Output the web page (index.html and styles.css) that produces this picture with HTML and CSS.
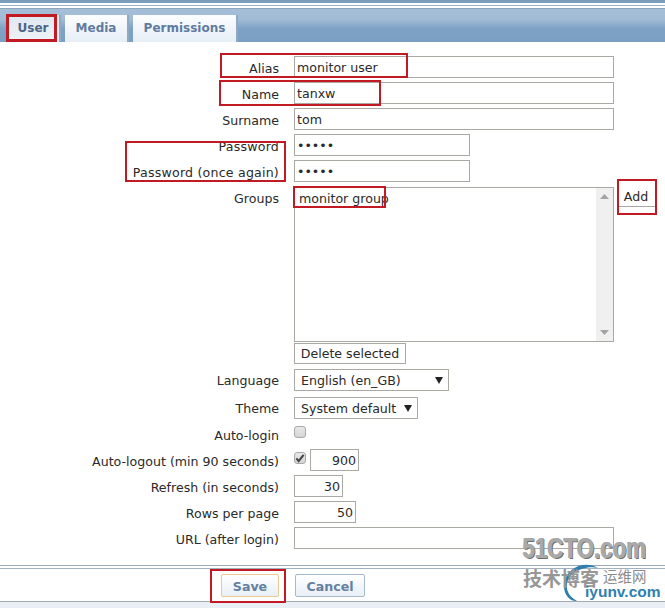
FILE: index.html
```html
<!DOCTYPE html>
<html lang="en">
<head>
<meta charset="utf-8">
<title>User</title>
<link rel="stylesheet" href="styles.css">
</head>
<body>
<div class="page">
  <div class="topstrip"></div>
  <nav class="tabbar">
    <a class="tab tab-active">User</a>
    <a class="tab">Media</a>
    <a class="tab">Permissions</a>
  </nav>
  <form class="form">
    <label class="lbl">Alias</label>
    <div class="ctl"><input class="inp w-full" value="monitor user"></div>
    <label class="lbl">Name</label>
    <div class="ctl"><input class="inp w-full" value="tanxw"></div>
    <label class="lbl">Surname</label>
    <div class="ctl"><input class="inp w-full" value="tom"></div>
    <label class="lbl lbl-pw">Password</label>
    <div class="ctl"><input class="inp w-pass pass" value="•••••"></div>
    <label class="lbl lbl-pw">Password (once again)</label>
    <div class="ctl"><input class="inp w-pass pass" value="•••••"></div>
    <label class="lbl lbl-groups">Groups</label>
    <div class="ctl ctl-groups">
      <div class="listbox">
        <div class="listitems">monitor group</div>
        <div class="scrollbar">
          <svg class="sb-arrow" width="9" height="5" viewBox="0 0 9 5"><path d="M4.5 0L9 5H0z"/></svg>
          <svg class="sb-arrow" width="9" height="5" viewBox="0 0 9 5"><path d="M0 0H9L4.5 5z"/></svg>
        </div>
      </div>
      <button type="button" class="btn-add">Add</button>
    </div>
    <div class="lbl lbl-del"></div>
    <div class="ctl ctl-del"><button type="button" class="btn-plain">Delete selected</button></div>
    <label class="lbl lbl-lang">Language</label>
    <div class="ctl ctl-lang"><div class="select w-lang"><span>English (en_GB)</span><svg width="8" height="7" viewBox="0 0 8 7"><path d="M0 0H8L4 7z"/></svg></div></div>
    <label class="lbl lbl-theme">Theme</label>
    <div class="ctl ctl-theme"><div class="select w-theme"><span>System default</span><svg width="8" height="7" viewBox="0 0 8 7"><path d="M0 0H8L4 7z"/></svg></div></div>
    <label class="lbl">Auto-login</label>
    <div class="ctl"><span class="check"></span></div>
    <label class="lbl">Auto-logout (min 90 seconds)</label>
    <div class="ctl ctl-logout">
      <span class="check"><svg width="11" height="10" viewBox="0 0 11 10"><path d="M1.5 5.5L4 8.5L9.5 1.5" fill="none" stroke="#444" stroke-width="2.2"/></svg></span>
      <input class="inp num w-logout" value="900">
    </div>
    <label class="lbl">Refresh (in seconds)</label>
    <div class="ctl"><input class="inp num w-refresh" value="30"></div>
    <label class="lbl">Rows per page</label>
    <div class="ctl"><input class="inp num w-rows" value="50"></div>
    <label class="lbl">URL (after login)</label>
    <div class="ctl"><input class="inp w-full" value=""></div>
  </form>
  <footer class="footer">
    <button type="button" class="fbtn fbtn-save">Save</button>
    <button type="button" class="fbtn fbtn-cancel">Cancel</button>
  </footer>
  <div class="bottomstrip"></div>

  <div class="mark mark-user"></div>
  <div class="mark mark-alias"></div>
  <div class="mark mark-name"></div>
  <div class="mark mark-pass"></div>
  <div class="mark mark-group"></div>
  <div class="mark mark-add"></div>
  <div class="mark mark-save"></div>

  <div class="wm">
    <svg class="wm-arc" width="50" height="50" viewBox="0 0 50 50"><path d="M38 7C24 -1 6 7 4 23C3 33 10 41 17 40C10 36 6 31 7 23C9 11 26 4 38 7z" fill="#2e7fae"/></svg>
    <div class="wm-51">51CTO.com</div>
    <div class="wm-cn">技术博客</div>
    <div class="wm-yw">运维网</div>
    <div class="wm-iy">iyunv.com</div>
  </div>
</div>
</body>
</html>
```
FILE: styles.css
```css
* { box-sizing: border-box; }
html, body { margin: 0; padding: 0; background: #fff; }
body { font-family: "DejaVu Sans", Verdana, sans-serif; font-size: 12.6px; color: #222; }
.page { position: relative; width: 665px; height: 608px; overflow: hidden; }

.topstrip { height: 6px; background: linear-gradient(#7c9dbd 0, #7c9dbd 3px, #fff 3px, #fff 5px, #9fb1c2 5px); }
.tabbar {
  margin-top: 2px; height: 34px; padding: 6px 0 0 6px; display: flex; gap: 4px; align-items: stretch;
  background: linear-gradient(#a6bfd8 0, #a3bcd6 30%, #7da2c5 60%, #7a9fc3 100%);
  border-top: 1px solid #8ea6bd;
}
.tab {
  width: 64px; background: linear-gradient(#fcfdfe, #e6eef6);
  border-right: 2px solid #8fa9c2;
  font-weight: bold; font-size: 12px; color: #5f7b9f; text-align: center; line-height: 26px;
}
.tab:nth-child(3) { width: 105px; }
.tab-active { width: 55px; background: linear-gradient(#dfe7ef, #f0f4f8); color: #4d6585; border-left: 1px solid #8fa9c2; }

.form {
  display: grid; grid-template-columns: 279px 1fr; column-gap: 15px; row-gap: 4px;
  padding-top: 14px; color: #2a2a2a;
}
.lbl { text-align: right; line-height: 22px; padding-top: 2px; height: 22px; white-space: nowrap; }
.lbl-pw { letter-spacing: .2px; padding-top: 2px; }
.ctl { display: flex; align-items: flex-start; min-height: 22px; }
.inp {
  height: 22px; border: 1px solid #aaa8a3; background: #fff; padding: 0 2px;
  font: inherit; color: #2a2a2a; outline: none; display: block;
}
.w-full { width: 320px; }
.w-pass { width: 176px; letter-spacing: 0; }
.num { text-align: right; }
.w-logout { width: 49px; margin-left: 4px; }
.w-refresh { width: 49px; }
.w-rows { width: 62px; }

.lbl-groups { margin-top: 1px; padding-top: 1px; }
.ctl-groups { margin-top: 1px; position: relative; }
.listbox { width: 320px; height: 155px; border: 1px solid #aaa8a3; display: flex; }
.listitems { flex: 1; padding: 2px 4px; line-height: 17px; }
.scrollbar {
  width: 17px; background: #f0f0f0; display: flex; flex-direction: column; justify-content: space-between;
  align-items: center; padding: 6px 0;
}
.sb-arrow { fill: #a3a3a3; }
.btn-add {
  position: absolute; left: 324px; top: -1px; width: 38px; height: 21px;
  border: 0; border-bottom: 1px solid #aaa8a3; background: #fff; font: inherit; color: #2a2a2a; padding: 0 2px 0 0;
}
.lbl-del { height: 18px; padding: 0; }
.ctl-del { margin-top: -3px; min-height: 0; }
.btn-plain {
  height: 21px; width: 112px; padding: 0; border: 1px solid #aaa8a3; background: #fff; font: inherit; color: #2a2a2a;
}
.select {
  height: 22px; border: 1px solid #aaa8a3; display: flex; align-items: center; justify-content: space-between;
  padding: 0 5px 0 6px;
}
.select svg { fill: #222; }
.w-lang { width: 155px; }
.w-theme { width: 124px; }
.lbl-lang, .ctl-lang { margin-top: 1px; }
.lbl-lang, .lbl-theme { padding-top: 1px; }
.lbl-theme, .ctl-theme { margin-top: 2px; }
.check {
  width: 12px; height: 12px; margin-top: 3px; border: 1px solid #a9a9a9; border-radius: 3px;
  background: linear-gradient(#e9e9e9, #d4d4d4); display: flex; align-items: center; justify-content: center; flex: none;
}
.footer {
  margin-top: 16px; height: 37px; border-top: 1px solid #9dabb8; border-bottom: 1px solid #a3adb6;
  box-shadow: inset 0 2px 0 #fff, inset 0 3px 0 #a2b1bf;
  display: flex; gap: 16px; padding: 8px 0 0 221px;
}
.fbtn {
  width: 58px; height: 23px; padding: 1px 0 0; font: bold 12.6px "DejaVu Sans", Verdana, sans-serif; color: #64809f;
  background: linear-gradient(#fff, #e8eff6); border: 1px solid #a5b9cc; border-radius: 2px;
}
.fbtn-save { border-color: #ecc98f; }
.fbtn-cancel { width: 70px; }
.bottomstrip { height: 6px; background: #e9eff4; }

.mark { position: absolute; border: 2px solid #c11a22; }
.mark-user { left: 6px; top: 14px; width: 51px; height: 28px; border-width: 3px; }
.mark-alias { left: 220px; top: 53px; width: 188px; height: 25px; }
.mark-name { left: 219px; top: 80px; width: 162px; height: 26px; }
.mark-pass { left: 125px; top: 141px; width: 161px; height: 41px; }
.mark-group { left: 293px; top: 186px; width: 93px; height: 22px; }
.mark-add { left: 617px; top: 179px; width: 40px; height: 36px; }
.mark-save { left: 210px; top: 569px; width: 76px; height: 34px; }

.wm { position: absolute; left: 0; top: 0; width: 665px; height: 608px; pointer-events: none; }
.wm-arc { position: absolute; left: 560px; top: 561px; }
.wm-51 {
  position: absolute; left: 522px; top: 532px; font: bold 29px "Liberation Sans", Arial, sans-serif; color: #a9a9a9;
  text-shadow: 1px 0 0 #a9a9a9, 2px 1px 0 #6f6f6f; transform: scaleX(.77); transform-origin: left top; white-space: nowrap;
}
.wm-cn { position: absolute; left: 523px; top: 566px; font: bold 19px "Noto Sans CJK SC", sans-serif; color: #969696; line-height: 24px; }
.wm-yw { position: absolute; left: 603px; top: 568px; font: 14.5px "Noto Sans CJK SC", sans-serif; color: #8c8c8c; line-height: 15px; height: 15px; }
.wm-iy { position: absolute; left: 585px; top: 584px; font: bold 15.5px "Liberation Sans", Arial, sans-serif; color: #2e7fae; line-height: 15px; }
```
